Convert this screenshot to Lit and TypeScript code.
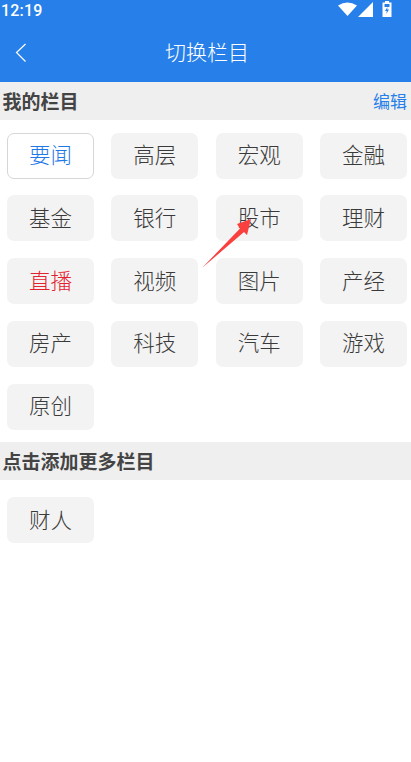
import {LitElement, html, css, svg} from 'lit';
import {customElement} from 'lit/decorators.js';

const MINE = [
  '要闻', '高层', '宏观', '金融',
  '基金', '银行', '股市', '理财',
  '直播', '视频', '图片', '产经',
  '房产', '科技', '汽车', '游戏',
  '原创',
];
const MORE = ['财人'];

@customElement('app-root')
export class AppRoot extends LitElement {
  static override styles = css`
    :host {
      display: block;
      position: relative;
      width: 411px;
      height: 762px;
      overflow: hidden;
      background: #fff;
      font-family: Roboto, 'Noto Sans CJK SC', sans-serif;
    }

    .top {
      background: #277fe9;
      color: #fff;
      height: 82px;
    }

    .status {
      height: 20px;
      padding: 0 19px 0 1px;
      display: flex;
      align-items: center;
      justify-content: space-between;
      font-size: 16px;
      font-weight: 500;
      letter-spacing: 0.2px;
    }

    .status-icons {
      display: flex;
      align-items: center;
      margin-top: -2px;
    }

    .signal {
      margin-left: 1px;
    }

    .battery {
      margin-left: 9px;
    }

    .nav {
      height: 62px;
      position: relative;
      display: flex;
      align-items: center;
      justify-content: center;
      font-size: 21px;
      font-weight: 300;
      padding-left: 3px;
    }

    .back {
      position: absolute;
      left: 15px;
      top: 23px;
    }

    .section {
      height: 38px;
      background: #efefef;
      display: flex;
      align-items: center;
      justify-content: space-between;
      padding: 0 4px 2px 2.5px;
      box-sizing: border-box;
      font-size: 19px;
      font-weight: 700;
      color: #444;
    }

    .edit {
      font-size: 17px;
      font-weight: 400;
      color: #277fe9;
    }

    .grid {
      display: grid;
      grid-template-columns: repeat(4, 87px);
      column-gap: 17.33px;
      row-gap: 16.75px;
      padding: 12.5px 0 12.5px 7px;
    }

    .grid.more {
      padding-top: 17px;
    }

    .chip {
      height: 46px;
      box-sizing: border-box;
      border-radius: 7px;
      background: #f3f3f3;
      color: #3a3a3a;
      font-size: 21.5px;
      font-weight: 300;
      padding-bottom: 4px;
      display: flex;
      align-items: center;
      justify-content: center;
    }

    .chip.active {
      background: #fff;
      border: 1.5px solid #d6d6d6;
      color: #1f78e6;
    }

    .chip.live {
      color: #e3222f;
    }

    .arrow {
      position: absolute;
      left: 200px;
      top: 216px;
    }
  `;

  private chip(name: string) {
    const cls = name === '要闻' ? 'chip active' : name === '直播' ? 'chip live' : 'chip';
    return html`<div class=${cls}>${name}</div>`;
  }

  override render() {
    return html`
      <div class="top">
        <div class="status">
          <span>12:19</span>
          <div class="status-icons">
            <svg width="19" height="14" viewBox="0 0 19 14">
              <path d="M0 3.500 Q9.500 -2.500 19 3.500 L9.500 14 Z" fill="#fff" />
            </svg>
            <svg class="signal" width="15" height="15" viewBox="0 0 15 15">
              <path d="M15 0 V15 H0 Z" fill="#fff" />
            </svg>
            <svg class="battery" width="10" height="16" viewBox="0 0 10 16">
              <path d="M3 0 H7 V1.500 H9.500 V16 H0.500 V1.500 H3 Z" fill="#fff" />
              <path d="M2.500 3 H7.500 V6 H2.500 Z" fill="#277fe9" />
              <path d="M5.500 6 L3 10 H4.800 L4.300 13 L7 8.500 H5.200 Z" fill="#277fe9" />
            </svg>
          </div>
        </div>
        <div class="nav">
          <svg class="back" width="12" height="20" viewBox="0 0 12 20">
            <path d="M10.500 1 L1.500 9.500 L10.500 18.500" fill="none" stroke="#fff" stroke-width="1.200" />
          </svg>
          切换栏目
        </div>
      </div>
      <div class="section"><span>我的栏目</span><span class="edit">编辑</span></div>
      <div class="grid">${MINE.map((n) => this.chip(n))}</div>
      <div class="section"><span>点击添加更多栏目</span></div>
      <div class="grid more">${MORE.map((n) => this.chip(n))}</div>
      <svg class="arrow" width="54" height="56" viewBox="0 0 54 56">
        ${svg`<path d="M2 52 L40 12.500 L37 8 L51 3 L47 19 L44 16 Z" fill="#f9403f" />`}
      </svg>
    `;
  }
}
